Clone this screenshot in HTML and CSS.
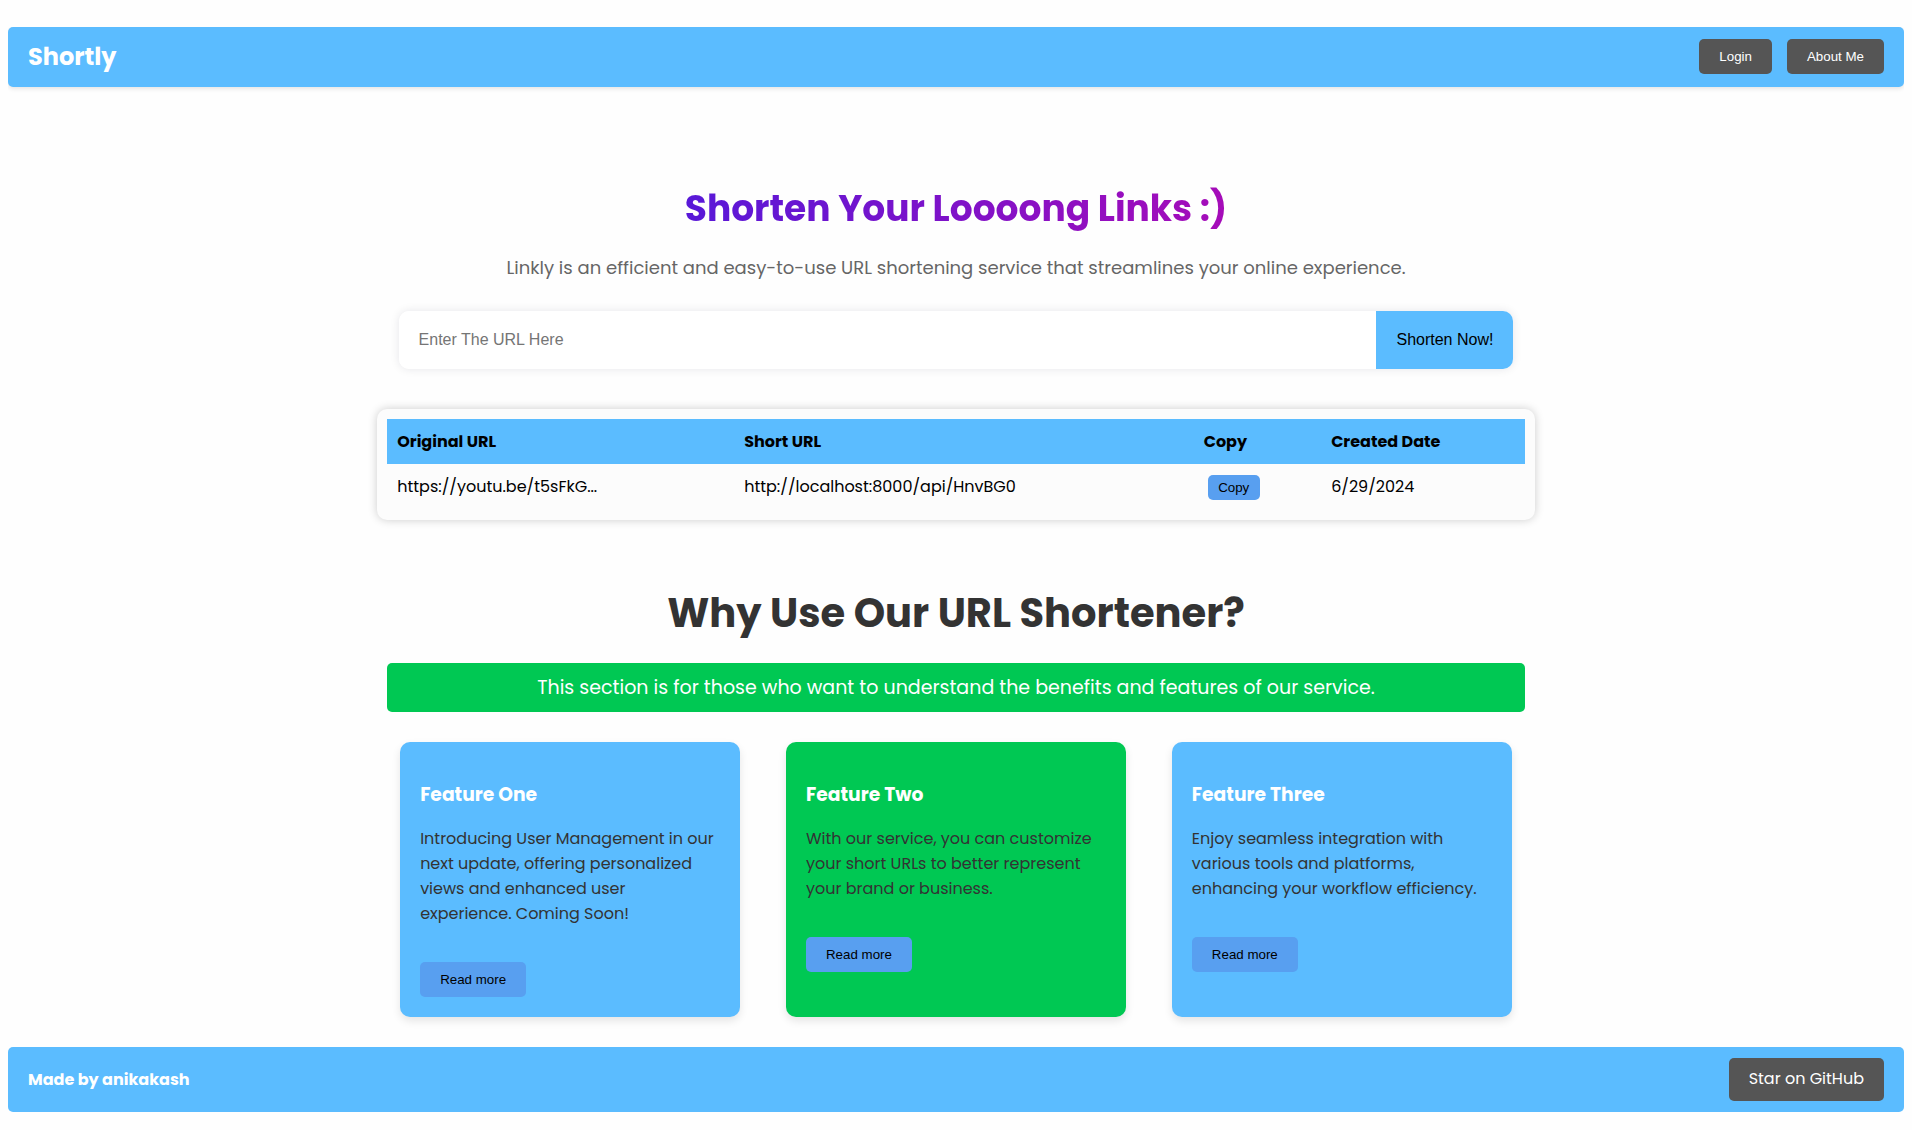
FILE: index.html
```
<!DOCTYPE html>
<html lang="en">
<head>
  <meta charset="utf-8">
  <meta name="viewport" content="width=device-width, initial-scale=1">
  <title>Shortly</title>
  <link rel="stylesheet" href="styles.css">
</head>
<body>
  <header class="navbar">
    <a class="logo" href="#">Shortly</a>
    <nav class="nav-actions">
      <button class="btn btn-dark" type="button">Login</button>
      <button class="btn btn-dark" type="button">About Me</button>
    </nav>
  </header>

  <main class="main">
    <section class="hero">
      <h1 class="hero-title">Shorten Your Loooong Links :)</h1>
      <p class="hero-text">Linkly is an efficient and easy-to-use URL shortening service that streamlines your online experience.</p>
      <form class="url-form">
        <input class="url-input" type="text" placeholder="Enter The URL Here" aria-label="Enter The URL Here">
        <button class="url-submit" type="submit">Shorten Now!</button>
      </form>
    </section>

    <section class="table-card">
      <table class="url-table">
        <thead>
          <tr>
            <th class="col-original">Original URL</th>
            <th class="col-short">Short URL</th>
            <th class="col-copy">Copy</th>
            <th class="col-date">Created Date</th>
          </tr>
        </thead>
        <tbody>
          <tr>
            <td>https://youtu.be/t5sFkG...</td>
            <td>http://localhost:8000/api/HnvBG0</td>
            <td><button class="btn-copy" type="button">Copy</button></td>
            <td>6/29/2024</td>
          </tr>
        </tbody>
      </table>
    </section>

    <section class="why">
      <h2 class="why-title">Why Use Our URL Shortener?</h2>
      <p class="why-banner">This section is for those who want to understand the benefits and features of our service.</p>
      <div class="cards">
        <article class="card">
          <h3 class="card-title">Feature One</h3>
          <p class="card-text">Introducing User Management in our next update, offering personalized views and enhanced user experience. Coming Soon!</p>
          <button class="btn btn-blue" type="button">Read more</button>
        </article>
        <article class="card card-green">
          <h3 class="card-title">Feature Two</h3>
          <p class="card-text">With our service, you can customize your short URLs to better represent your brand or business.</p>
          <button class="btn btn-blue" type="button">Read more</button>
        </article>
        <article class="card">
          <h3 class="card-title">Feature Three</h3>
          <p class="card-text">Enjoy seamless integration with various tools and platforms, enhancing your workflow efficiency.</p>
          <button class="btn btn-blue" type="button">Read more</button>
        </article>
      </div>
    </section>
  </main>

  <footer class="footer">
    <span class="credit">Made by anikakash</span>
    <a class="star-link" href="#">Star on GitHub</a>
  </footer>
</body>
</html>
```
FILE: styles.css
```
* {
  box-sizing: border-box;
}

body {
  margin: 27px 8px 18px;
  background: #fefefe;
  color: #000;
  font-family: Poppins, Inter, sans-serif;
  font-size: 16px;
  line-height: 24px;
}

h1, h2, h3, p {
  margin: 0;
}

button, input {
  font-family: "Liberation Sans", Arial, sans-serif;
}

.navbar,
.footer {
  display: flex;
  align-items: center;
  justify-content: space-between;
  padding: 0 20px;
  background: #5bbcff;
  border-radius: 5px;
}

.navbar {
  min-height: 60px;
  padding-bottom: 1px;
  box-shadow: 0 2px 4px rgba(0, 0, 0, 0.1);
}

.logo {
  color: #fff;
  font-size: 24px;
  font-weight: 700;
  text-decoration: none;
}

.nav-actions {
  display: flex;
  gap: 15px;
}

.btn {
  height: 35px;
  padding: 0 20px;
  border: 0;
  border-radius: 5px;
}

.btn-dark {
  background: #555;
  color: #fff;
  font-weight: 500;
}

.btn-blue {
  align-self: flex-start;
  background: #589ff0;
  color: #000;
}

.main {
  width: 60%;
  margin: 0 auto;
}

.hero {
  display: flex;
  flex-direction: column;
  align-items: center;
  padding-top: 94px;
  text-align: center;
}

.hero-title {
  width: 100%;
  background: linear-gradient(90deg, #2e1fe9, #d005a7);
  -webkit-background-clip: text;
  background-clip: text;
  color: transparent;
  font-size: 36px;
  font-weight: 700;
  line-height: 56px;
}

.hero-text {
  margin-top: 17px;
  color: #666;
  font-size: 18px;
  line-height: 28px;
}

.url-form {
  display: flex;
  width: 98%;
  height: 58px;
  margin-top: 29px;
  overflow: hidden;
  border-radius: 10px;
  box-shadow: 0 0 10px rgba(0, 0, 50, 0.1);
}

.url-input {
  flex: 1;
  min-width: 0;
  padding: 0 20px;
  border: 0;
  background: #fff;
  font-size: 16px;
}

.url-input::placeholder {
  color: #757575;
}

.url-submit {
  padding: 0 20px;
  border: 0;
  background: #5bbcff;
  color: #000;
  font-size: 16px;
}

.table-card {
  margin: 40px -10px 0;
  padding: 10px;
  background: #fcfcfc;
  border-radius: 10px;
  box-shadow: 0 0 10px rgba(0, 0, 0, 0.2);
}

.url-table {
  width: 100%;
  border-collapse: collapse;
  table-layout: fixed;
  text-align: left;
}

.url-table th,
.url-table td {
  padding: 0 10px;
}

.url-table th {
  height: 45px;
  background: #5bbcff;
  font-weight: 700;
}

.url-table td {
  height: 46px;
}

.col-original {
  width: 30.5%;
}

.col-short {
  width: 40.4%;
}

.col-copy {
  width: 11.2%;
}

.btn-copy {
  display: block;
  width: 52px;
  height: 25px;
  margin-left: 4px;
  padding: 0;
  border: 0;
  border-radius: 5px;
  background: #589ff0;
  color: #000;
}

.why {
  padding-top: 63px;
}

.why-title {
  color: #333;
  font-size: 40px;
  font-weight: 700;
  line-height: 60px;
  text-align: center;
}

.why-banner {
  margin-top: 20px;
  padding: 10px;
  background: #00c853;
  border-radius: 5px;
  color: #fff;
  font-size: 19px;
  line-height: 29px;
  text-align: center;
}

.cards {
  display: flex;
  justify-content: space-around;
  gap: 20px;
  margin-top: 30px;
}

.card {
  display: flex;
  flex-direction: column;
  width: 340px;
  padding: 40px 20px 20px;
  background: #5bbcff;
  border-radius: 10px;
  box-shadow: 0 4px 8px rgba(0, 0, 0, 0.1);
}

.card-green {
  background: #00c853;
}

.card-title {
  color: #fff;
  font-weight: 700;
  line-height: 26px;
}

.card-text {
  margin: 18px 0 36px;
  color: #333;
  line-height: 25px;
}

.footer {
  min-height: 65px;
  margin-top: 30px;
}

.credit {
  color: #fff;
  font-weight: 700;
}

.star-link {
  padding: 9px 20px 10px;
  background: #555;
  border-radius: 5px;
  color: #fff;
  text-decoration: none;
}
```
